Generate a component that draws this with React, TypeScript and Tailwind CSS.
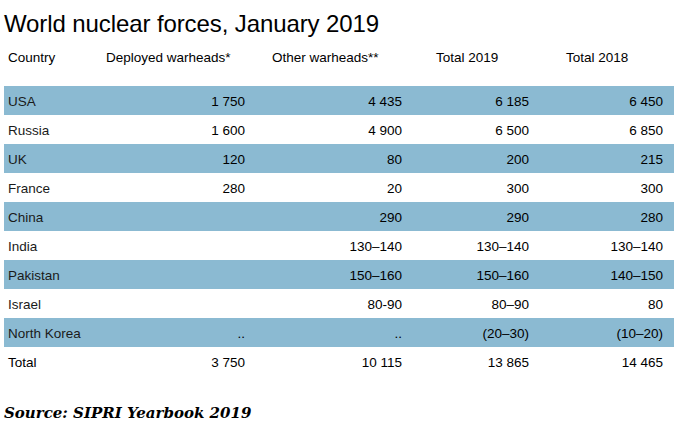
const rows = [
  { country: "USA", deployed: "1 750", other: "4 435", t2019: "6 185", t2018: "6 450" },
  { country: "Russia", deployed: "1 600", other: "4 900", t2019: "6 500", t2018: "6 850" },
  { country: "UK", deployed: "120", other: "80", t2019: "200", t2018: "215" },
  { country: "France", deployed: "280", other: "20", t2019: "300", t2018: "300" },
  { country: "China", deployed: "", other: "290", t2019: "290", t2018: "280" },
  { country: "India", deployed: "", other: "130–140", t2019: "130–140", t2018: "130–140" },
  { country: "Pakistan", deployed: "", other: "150–160", t2019: "150–160", t2018: "140–150" },
  { country: "Israel", deployed: "", other: "80-90", t2019: "80–90", t2018: "80" },
  { country: "North Korea", deployed: "..", other: "..", t2019: "(20–30)", t2018: "(10–20)" },
]

const grid = "grid grid-cols-[96px_149px_157px_127px_134px] items-center pt-[4px]"

export default function App() {
  return (
    <div className="w-[674px] h-[423px] bg-white text-black font-['Liberation_Sans',Arial,sans-serif] pl-[4px]">
      {/* Title */}
      <h1 className="pt-[10px] text-[24px] leading-[28px] font-normal tracking-[-0.1px]">
        World nuclear forces, January 2019
      </h1>

      {/* Header */}
      <div className={`${grid} mt-[4px] h-[29px] text-[13.5px]`}>
        <div className="pl-[4px]">Country</div>
        <div className="pl-[6px]">Deployed warheads*</div>
        <div className="pl-[23px]">Other warheads**</div>
        <div className="pl-[30px]">Total 2019</div>
        <div className="pl-[33px]">Total 2018</div>
      </div>

      {/* Rows */}
      <div className="mt-[15px] text-[13.5px]">
        {rows.map((r, i) => (
          <div
            key={r.country}
            className={`${grid} h-[29px] ${i % 2 === 0 ? "bg-[#8bbad2]" : "bg-white"}`}
          >
            <div className="pl-[4px] text-[#1a1a1a]">{r.country}</div>
            <div className="text-right pr-[4px]">{r.deployed}</div>
            <div className="text-right pr-[4px]">{r.other}</div>
            <div className="text-right pr-[4px]">{r.t2019}</div>
            <div className="text-right pr-[4px]">{r.t2018}</div>
          </div>
        ))}
        <div className={`${grid} h-[29px]`}>
          <div className="pl-[4px]">Total</div>
          <div className="text-right pr-[4px]">3 750</div>
          <div className="text-right pr-[4px]">10 115</div>
          <div className="text-right pr-[4px]">13 865</div>
          <div className="text-right pr-[4px]">14 465</div>
        </div>
      </div>

      {/* Source */}
      <p className="mt-[27px] text-[15px] leading-[20px] font-bold italic font-['DejaVu_Serif',Georgia,serif]">
        Source: SIPRI Yearbook 2019
      </p>
    </div>
  )
}
